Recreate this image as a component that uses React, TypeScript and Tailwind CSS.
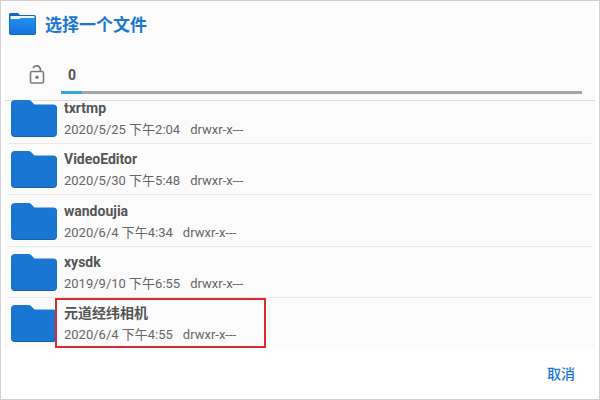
import React, { useState } from "react";

interface FileEntry {
  name: string;
  date: string;
  mode: string;
}

const entries: FileEntry[] = [
  { name: "txrtmp", date: "2020/5/25 下午2:04", mode: "drwxr-x---" },
  { name: "VideoEditor", date: "2020/5/30 下午5:48", mode: "drwxr-x---" },
  { name: "wandoujia", date: "2020/6/4 下午4:34", mode: "drwxr-x---" },
  { name: "xysdk", date: "2019/9/10 下午6:55", mode: "drwxr-x---" },
  { name: "元道经纬相机", date: "2020/6/4 下午4:55", mode: "drwxr-x---" },
];

const FolderIcon: React.FC = () => (
  <svg
    className="w-[46px] h-[37px] mb-[6px] shrink-0"
    viewBox="0 0 46 37"
    fill="none"
  >
    <path
      d="M4 1H18.5L23.5 5H42Q46 5 46 9V33Q46 37 42 37H4Q0 37 0 33V5Q0 1 4 1Z"
      fill="#1560ae"
    />
    <path
      d="M4 0H17.5Q19 0 20 1L23.5 4.5H42Q46 4.5 46 8.5V32Q46 36 42 36H4Q0 36 0 32V4Q0 0 4 0Z"
      fill="#1976d2"
    />
  </svg>
);

const TitleFolderIcon: React.FC = () => (
  <svg className="w-[27px] h-[22px] shrink-0" viewBox="0 0 27 22" fill="none">
    <defs>
      <linearGradient id="folder-front" x1="0" y1="0" x2="0" y2="1">
        <stop offset="0" stopColor="#2390f0" />
        <stop offset="1" stopColor="#1670dc" />
      </linearGradient>
    </defs>
    <path
      d="M1.5 0H9L11 2H25Q27 2 27 4V20Q27 22 25 22H2Q0 22 0 20V1.5Q0 0 1.5 0Z"
      fill="#1467bd"
    />
    <rect x="1.5" y="3" width="24" height="4" rx="0.5" fill="#e6f4fc" />
    <path
      d="M1.5 6H10L12 5H25.5Q26.5 5 26.5 6V20Q26.5 21.3 25 21.3H2Q0.5 21.3 0.5 20V7Q0.5 6 1.5 6Z"
      fill="url(#folder-front)"
    />
  </svg>
);

const UnlockIcon: React.FC = () => (
  <svg
    className="w-4 h-5 shrink-0"
    viewBox="0 0 16 20"
    fill="none"
    stroke="#7b7b7b"
    strokeWidth="1.6"
  >
    <rect x="1.5" y="7.5" width="13" height="11.5" rx="1.5" />
    <path d="M4 4.2A3.9 3.9 0 0 1 11.4 5V7.5" />
    <circle cx="8" cy="13.2" r="1.7" fill="#7b7b7b" stroke="none" />
  </svg>
);

const App: React.FC = () => {
  const [selected, setSelected] = useState("元道经纬相机");

  return (
    <main className="min-h-screen flex flex-col bg-white border border-[#d3cfd1] px-1 font-['Roboto','Noto_Sans_CJK_SC',sans-serif] text-[#555555]">
      <div className="bg-[#fbfbfb]">
        {/* Title */}
        <header className="flex items-center gap-[9px] h-[46px] pl-1">
          <TitleFolderIcon />
          <h1 className="text-[17px] leading-6 pt-px font-bold text-[#1976d2]">
            选择一个文件
          </h1>
        </header>

        {/* Current level */}
        <div className="flex gap-4 h-[54px] pl-6 pr-[13px] border-b border-[#dddddd]">
          <div className="pt-[17px]">
            <UnlockIcon />
          </div>
          <div className="flex-1 flex flex-col justify-end pb-[6px]">
            <span className="px-[7px] pb-[6px] text-sm leading-5 font-bold">
              0
            </span>
            <div className="h-[3px] bg-[#a6a6a6]">
              <div className="w-[21px] h-full bg-[#2fa9df]" />
            </div>
          </div>
        </div>

        {/* File list, the first row sits partly under the header */}
        <ul className="h-[248px] grid grid-rows-[43px_repeat(4,minmax(0,1fr))] pl-1 pr-1">
          {entries.map((entry) => (
            <li
              key={entry.name}
              className="border-b border-[#e8e8e8] last:border-transparent"
            >
              <button
                onClick={() => setSelected(entry.name)}
                className="w-full h-full flex items-end pl-[2px] text-left"
              >
                <FolderIcon />
                <span
                  className={`w-[211px] h-[50px] flex flex-col justify-center gap-[2px] pt-[2px] pl-[7px] -ml-[2px] border-2 ${
                    selected === entry.name
                      ? "border-[#dc2a35]"
                      : "border-transparent"
                  }`}
                >
                  <span className="text-sm leading-5 font-bold">
                    {entry.name}
                  </span>
                  <span className="flex gap-[10px] text-[13px] leading-5 text-[#666666]">
                    <span>{entry.date}</span>
                    <span>{entry.mode}</span>
                  </span>
                </span>
              </button>
            </li>
          ))}
        </ul>
      </div>

      <footer className="flex-1 flex items-center justify-end pr-5">
        <button className="text-sm leading-5 font-medium text-[#1976d2]">
          取消
        </button>
      </footer>
    </main>
  );
};

export default App;
